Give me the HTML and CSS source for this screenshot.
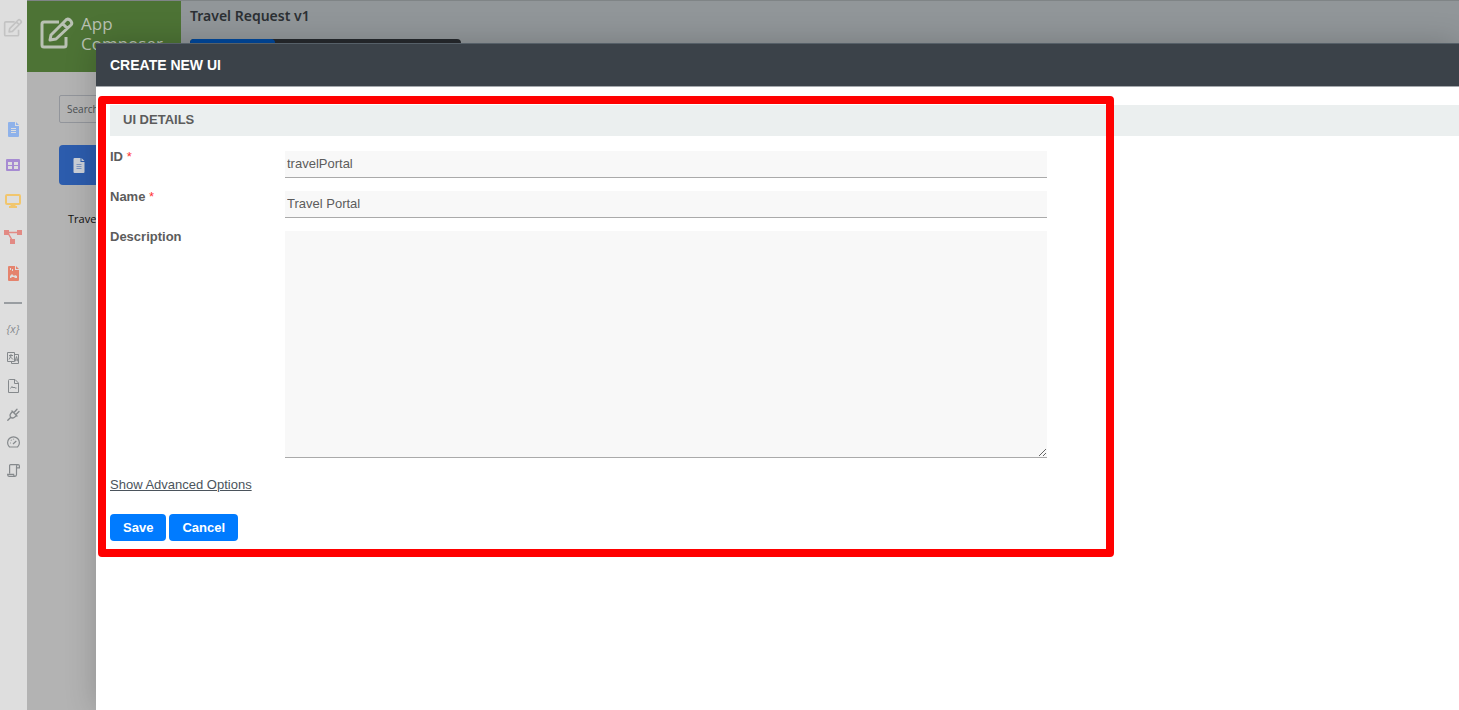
FILE: index.html
```
<!DOCTYPE html>
<html lang="en">
  <head>
    <meta charset="utf-8">
    <title>App Composer</title>
    <link rel="stylesheet" href="styles.css">
  </head>
  <body>
    <nav class="rail">
      <a href="#" class="rail-logo" aria-label="Home">
        <svg width="20" height="20" viewBox="0 0 36 36" fill="none" stroke="#c3c3c3" stroke-width="3" stroke-linejoin="round"><path d="M21 7H5q-2 0-2 2v21q0 2 2 2h21q2 0 2-2v-9"/><path d="M12 19 27 4q2-2 4 0l1 1q2 2 0 4L17 24l-6 1zM24 7l5 5"/></svg>
      </a>
      <a href="#" class="rail-item" aria-label="Forms">
        <svg width="11" height="15" viewBox="0 0 11 15"><path fill="#8fb2ea" d="M1 0h6v4h4v10q0 1-1 1H1q-1 0-1-1V1q0-1 1-1zM8 0l3 3H8z"/><path stroke="#dedede" d="M3 6.500h5M3 8.500h5M3 10.500h5"/></svg>
      </a>
      <a href="#" class="rail-item" aria-label="Lists">
        <svg width="14" height="12" viewBox="0 0 14 12"><rect width="14" height="12" rx="1" fill="#a68bd2"/><path fill="#dedede" d="M2 3h4v3H2zM8 3h4v3H8zM2 7h4v3H2zM8 7h4v3H8z"/></svg>
      </a>
      <a href="#" class="rail-item" aria-label="UI">
        <svg width="16" height="14" viewBox="0 0 16 14"><rect x="1" y="1" width="14" height="9" rx="1" fill="none" stroke="#f1c66e" stroke-width="2"/><path fill="#f1c66e" d="M6 10h4l1 3H5zM4 12h8v2H4z"/></svg>
      </a>
      <a href="#" class="rail-item" aria-label="Processes">
        <svg width="18" height="16" viewBox="0 0 18 16" fill="#e28a84"><rect width="5" height="5" y="1"/><rect width="5" height="5" x="13" y="1"/><rect width="5" height="5" x="6" y="10"/><path fill="none" stroke="#e28a84" stroke-width="1.500" d="M4 3.500h10M4 4l4 7"/></svg>
      </a>
      <a href="#" class="rail-item" aria-label="Reports">
        <svg width="11" height="15" viewBox="0 0 11 15"><path fill="#e5836d" d="M1 0h6v4h4v10q0 1-1 1H1q-1 0-1-1V1q0-1 1-1zM8 0l3 3H8z"/><path fill="#dedede" d="M2 12V10l2-2 2 2 1-1 2 1v2H7l-1-1H4l-1 1z"/><path stroke="#dedede" d="M2.500 2v2M4.500 3v2"/></svg>
      </a>
      <hr class="rail-line">
      <a href="#" class="rail-tool rail-var" aria-label="Variables">{x}</a>
      <a href="#" class="rail-tool" aria-label="Translations">
        <svg width="14" height="14" viewBox="0 0 14 14" fill="none" stroke="#85898c"><path d="M5 10.500H1.500v-9h7v9H5M8.500 3.500h4v9H5.500v-2"/><path d="M3 4.500h4M5 3v2L3 8.500M4 5.500l3 3M9 10.500l1.500-5 1.500 5M9.500 9h2"/></svg>
      </a>
      <a href="#" class="rail-tool" aria-label="Files">
        <svg width="11" height="14" viewBox="0 0 11 14" fill="none" stroke="#85898c"><path d="M1.500.5H7L10.500 4v9.500h-10V1.500q0-1 1-1zM6.500.5v4h4"/><path d="M2.500 9.500l1.500-2 1 1.500 1-1 1 1h1.500"/></svg>
      </a>
      <a href="#" class="rail-tool" aria-label="Plugins">
        <svg width="13" height="13" viewBox="0 0 13 13" fill="none" stroke="#85898c" stroke-width="1.300" stroke-linecap="round"><path d="M.8 12.200l3-3M5 3l5 5M5.500 3.500 3.800 5.500q-1.500 2 0 3.700t3.700 0L9.500 7.500M7 4.500l3-3.300M9 6.500l3-3"/></svg>
      </a>
      <a href="#" class="rail-tool" aria-label="Performance">
        <svg width="13" height="12" viewBox="0 0 13 12" fill="none" stroke="#85898c" stroke-width="1.200"><path d="M2.500 11q-1.900-1.700-1.900-4.300a5.900 5.900 0 0 1 11.800 0q0 2.600-1.900 4.300z"/><path d="M6 8l3.300-3M3 7h.8M4 4l.5.5M6.500 2.800v.7"/></svg>
      </a>
      <a href="#" class="rail-tool" aria-label="Logs">
        <svg width="13" height="13" viewBox="0 0 13 13" fill="none" stroke="#85898c" stroke-width="1.200"><path d="M2.600 9.500V1.600q0-1 1-1h7.400M11 .6q-1.500 0-1.500 2v8q0 1.700-1.500 1.700H2q-1.400 0-1.400-2h6q0 2 1.400 2M9.500 3.800h2.900V2q0-1.400-1.400-1.400"/></svg>
      </a>
    </nav>

    <div class="app">
      <header class="topbar">
        <div class="brand">
          <svg width="34" height="32" viewBox="0 0 34 32" fill="none" stroke="#b9c1b3" stroke-width="3" stroke-linejoin="round"><path d="M19 5H4Q2 5 2 7v21q0 2 2 2h20q2 0 2-2v-8"/><path d="M11 18 25 4q2-3 5-1 3 3 1 5L16 22l-6 1zM22 6l6 6"/></svg>
          <span class="brand-name">App Composer</span>
        </div>
        <div class="app-title">
          <h1>Travel Request v1</h1>
          <div class="tabs"><span class="tab-active"></span></div>
        </div>
      </header>
      <aside class="sidebar">
        <input type="text" class="search" placeholder="Search" aria-label="Search">
        <button type="button" class="add-form" aria-label="Add new form">
          <svg width="12" height="15" viewBox="0 0 11 15"><path fill="#cbd0d8" d="M1 0h6v4h4v10q0 1-1 1H1q-1 0-1-1V1q0-1 1-1zM8 0l3 3H8z"/><path stroke="#7f97c2" d="M3 6.500h5M3 8.500h5M3 10.500h5"/></svg>
        </button>
        <a href="#" class="form-link">Travel Request</a>
      </aside>
    </div>

    <div class="modal" role="dialog" aria-labelledby="modalTitle">
      <h2 class="modal-title" id="modalTitle">CREATE NEW UI</h2>
      <form class="modal-body">
        <h3 class="section-title">UI DETAILS</h3>
        <div class="row">
          <label for="id">ID <span class="required">*</span></label>
          <input type="text" id="id" name="id" value="travelPortal">
        </div>
        <div class="row">
          <label for="name">Name <span class="required">*</span></label>
          <input type="text" id="name" name="name" value="Travel Portal">
        </div>
        <div class="row">
          <label for="description">Description</label>
          <textarea id="description" name="description"></textarea>
        </div>
        <a href="#" class="advanced">Show Advanced Options</a>
        <div class="buttons">
          <button type="button">Save</button>
          <button type="button">Cancel</button>
        </div>
      </form>
      <div class="highlight"></div>
    </div>
  </body>
</html>
```
FILE: styles.css
```
* {
  box-sizing: border-box;
}

body {
  margin: 0;
  min-height: 100vh;
  display: flex;
  position: relative;
  overflow: hidden;
  background-color: #b3b3b3;
  font-family: "Liberation Sans", Arial, sans-serif;
  font-size: 13px;
}

svg {
  display: block;
}

/* left icon rail */
.rail {
  width: 27px;
  flex-shrink: 0;
  display: flex;
  flex-direction: column;
  padding-right: 1px;
  background-color: #dedede;
}

.rail a {
  display: flex;
  align-items: center;
  justify-content: center;
  text-decoration: none;
}

.rail .rail-logo {
  height: 56px;
  margin-bottom: 55px;
}

.rail-item {
  height: 36px;
}

.rail-tool {
  height: 28px;
}

.rail-var {
  padding-bottom: 4px;
  color: #85898c;
  font-family: "Open Sans", sans-serif;
  font-size: 11px;
  font-style: italic;
}

.rail-line {
  width: 18px;
  height: 2px;
  margin: 11px auto 12px;
  border: none;
  background-color: #999da1;
}

/* page behind the dialog */
.app {
  flex: 1;
  min-width: 0;
}

.topbar {
  display: flex;
  height: 72px;
  background-color: #919699;
  border-top: 1px solid #7f8486;
}

.brand {
  width: 154px;
  display: flex;
  gap: 7px;
  padding: 16px 0 0 13px;
  background-color: #4d7335;
}

.brand-name {
  width: 90px;
  margin-top: -3px;
  color: #b9c1b3;
  font-family: "Open Sans", sans-serif;
  font-size: 17px;
  line-height: 20px;
}

.app-title {
  padding: 6px 9px;
  font-family: "Noto Sans", sans-serif;
}

.app-title h1 {
  margin: 0;
  color: #2c3034;
  font-size: 14px;
  font-weight: 600;
  line-height: 18px;
}

.tabs {
  width: 271px;
  height: 30px;
  margin-top: 14px;
  border-radius: 4px;
  background-color: #26292d;
}

.tab-active {
  display: block;
  width: 85px;
  height: 100%;
  border-radius: 4px;
  background-color: #00489c;
}

.sidebar {
  width: 280px;
  display: flex;
  flex-direction: column;
  padding: 23px 32px;
  font-family: "Open Sans", sans-serif;
}

.search {
  height: 28px;
  padding: 0 7px;
  border: 1px solid #92959b;
  border-radius: 2px;
  background-color: #b3b3b3;
  font-family: "Open Sans", sans-serif;
  font-size: 10px;
}

.search::placeholder {
  color: #4c5054;
}

.add-form {
  height: 40px;
  margin-top: 22px;
  padding: 0 14px;
  border: none;
  border-radius: 4px;
  background-color: #2c5cad;
}

.form-link {
  margin-top: 25px;
  padding-left: 9px;
  color: #111111;
  font-size: 11px;
  line-height: 18px;
  text-decoration: none;
}

/* dialog */
.modal {
  position: absolute;
  top: 43px;
  right: 0;
  bottom: 0;
  left: 96px;
  background-color: #ffffff;
  box-shadow: 0 0 30px rgba(0, 0, 0, 0.2);
}

.modal-title {
  margin: 0;
  padding: 0 14px;
  border-top: 1px solid #566068;
  border-bottom: 1px solid #a5a9ad;
  background-color: #3b4249;
  color: #ffffff;
  font-size: 14px;
  line-height: 42px;
}

.modal-body {
  padding: 18px 0 0 14px;
}

.section-title {
  margin: 0 0 13px;
  padding: 0 13px 2px;
  background-color: #ebefef;
  color: #5c5c5c;
  font-size: 13px;
  line-height: 29px;
}

.row {
  display: flex;
  max-width: 937px;
  margin-bottom: 11px;
}

.row label {
  width: 175px;
  flex-shrink: 0;
  color: #5c5c5c;
  font-weight: bold;
  line-height: 16px;
}

.required {
  color: #ff3333;
  font-weight: normal;
}

.row input,
.row textarea {
  flex: 1;
  min-width: 0;
  height: 27px;
  margin: 2px 0 0;
  padding: 0 2px 2px;
  border: none;
  border-bottom: 1px solid #aaaaaa;
  border-radius: 0;
  background-color: #f8f8f8;
  color: #5c5c5c;
  font-family: inherit;
  font-size: 13px;
}

.row textarea {
  height: 227px;
}

.advanced {
  display: block;
  width: fit-content;
  margin-top: 19px;
  color: #4b545c;
  line-height: 16px;
}

.buttons {
  display: flex;
  gap: 3px;
  margin-top: 21px;
}

.buttons button {
  height: 27px;
  padding: 0 13px;
  border: none;
  border-radius: 4px;
  background-color: #007bff;
  color: #ffffff;
  font-family: inherit;
  font-size: 13px;
  font-weight: bold;
}

/* red frame over the form */
.highlight {
  position: absolute;
  top: 53px;
  left: 2px;
  width: 1016px;
  height: 461px;
  border: 8px solid #ff0000;
  border-radius: 4px;
  pointer-events: none;
}
```
